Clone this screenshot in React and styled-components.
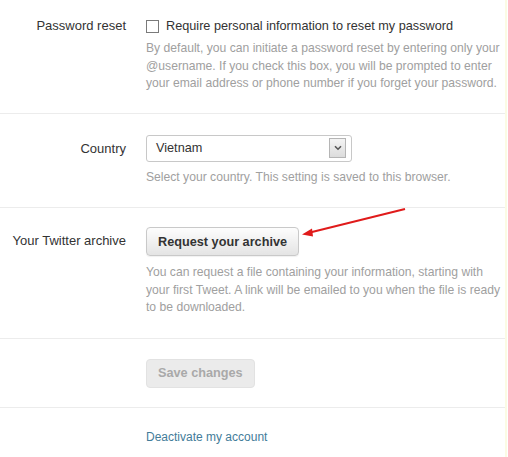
import React from 'react';
import styled, { createGlobalStyle } from 'styled-components';

const GlobalStyle = createGlobalStyle`
	html, body {
		margin: 0;
		padding: 0;
		background: #fff;
	}
	body {
		font-family: "Liberation Sans", Arial, sans-serif;
	}
`;

const Page = styled("div")`
	width: 508px;
	height: 457px;
	position: relative;
	overflow: hidden;
	background: #fff;
	&::after {
		content: "";
		position: absolute;
		top: 0;
		bottom: 0;
		left: 505px;
		width: 2px;
		background: #fbfbe4;
	}
`;
const Form = styled("div")`
	width: 506px;
	display: flex;
	flex-direction: column;
`;
const Row = styled("div")`
	display: grid;
	grid-template-columns: 126px 1fr;
	column-gap: 20px;
	align-items: start;
	padding: ${(p) => p.$pad};
	border-bottom: ${(p) => (p.$last ? "none" : "1px solid #ececec")};
`;
const Label = styled("div")`
	text-align: right;
	font-size: 13px;
	color: #333;
	line-height: 18px;
	padding-top: ${(p) => p.$top || "0px"};
	white-space: nowrap;
`;
const Content = styled("div")`
	display: flex;
	flex-direction: column;
	align-items: flex-start;
`;
const CheckLine = styled("label")`
	display: flex;
	align-items: center;
	gap: 7px;
	font-size: 12.7px;
	color: #333;
	line-height: 18px;
`;
const Box = styled("span")`
	width: 11px;
	height: 11px;
	border: 1px solid #7a7a7a;
	background: #fff;
	flex: none;
`;
const Help = styled("p")`
	margin: ${(p) => p.$top || "4px"} 0 0;
	font-size: 12.15px;
	line-height: 17.5px;
	color: #a0a0a0;
	white-space: nowrap;
`;
const Select = styled("div")`
	width: 206px;
	height: 27px;
	box-sizing: border-box;
	border: 1px solid #c8c8c8;
	border-radius: 3px;
	display: flex;
	align-items: center;
	justify-content: space-between;
	padding: 0 5px 0 9px;
	font-size: 12.7px;
	color: #333;
`;
const SelectArrow = styled("span")`
	width: 15px;
	height: 18px;
	border: 1px solid #b5b5b5;
	background: linear-gradient(#f4f4f4, #dcdcdc);
	display: flex;
	align-items: center;
	justify-content: center;
`;
const Button = styled("button")`
	font-family: "Liberation Sans", Arial, sans-serif;
	font-weight: bold;
	font-size: 12.7px;
	height: 29px;
	padding: 0 11px;
	border-radius: 4px;
	cursor: pointer;
	color: ${(p) => (p.disabled ? "#a9a9a9" : "#333")};
	border: 1px solid ${(p) => (p.disabled ? "#e2e2e2" : "#c9c9c9")};
	background: ${(p) =>
		p.disabled ? "#ebebeb" : "linear-gradient(#fdfdfd, #e4e4e4)"};
	box-shadow: ${(p) => (p.disabled ? "none" : "0 1px 1px rgba(0,0,0,0.06)")};
`;
const Link = styled("a")`
	font-size: 12px;
	color: #437c99;
	text-decoration: none;
	line-height: 18px;
`;
const Pointer = styled("svg")`
	position: absolute;
	left: 0;
	top: 0;
	pointer-events: none;
`;

export default function App() {
	return (
		<Page>
			<GlobalStyle />
			<Form>
				<Row $pad="17px 0 20px">
					<Label>Password reset</Label>
					<Content>
						<CheckLine>
							<Box />
							Require personal information to reset my password
						</CheckLine>
						<Help $top="5px">
							By default, you can initiate a password reset by entering only your<br />
							@username. If you check this box, you will be prompted to enter<br />
							your email address or phone number if you forget your password.
						</Help>
					</Content>
				</Row>
				<Row $pad="21px 0 21px">
					<Label $top="5px">Country</Label>
					<Content>
						<Select>
							Vietnam
							<SelectArrow>
								<svg width="8" height="6" viewBox="0 0 8 6">
									<path d="M1 1.2 L4 4.2 L7 1.2" fill="none" stroke="#555" strokeWidth="1.6" />
								</svg>
							</SelectArrow>
						</Select>
						<Help $top="7px">Select your country. This setting is saved to this browser.</Help>
					</Content>
				</Row>
				<Row $pad="19px 0 21px">
					<Label $top="5px">Your Twitter archive</Label>
					<Content>
						<Button>Request your archive</Button>
						<Help $top="8px">
							You can request a file containing your information, starting with<br />
							your first Tweet. A link will be emailed to you when the file is ready<br />
							to be downloaded.
						</Help>
					</Content>
				</Row>
				<Row $pad="20px 0 19px">
					<div />
					<Content>
						<Button disabled>Save changes</Button>
					</Content>
				</Row>
				<Row $pad="20px 0 20px" $last>
					<div />
					<Content>
						<Link href="#">Deactivate my account</Link>
					</Content>
				</Row>
			</Form>
			<Pointer width="508" height="457" viewBox="0 0 508 457">
				<line x1="405" y1="209" x2="310" y2="232.5" stroke="#e01b1b" strokeWidth="2" />
				<path d="M302 234.5 L312 228.5 L313 236.5 Z" fill="#e01b1b" />
			</Pointer>
		</Page>
	);
}
